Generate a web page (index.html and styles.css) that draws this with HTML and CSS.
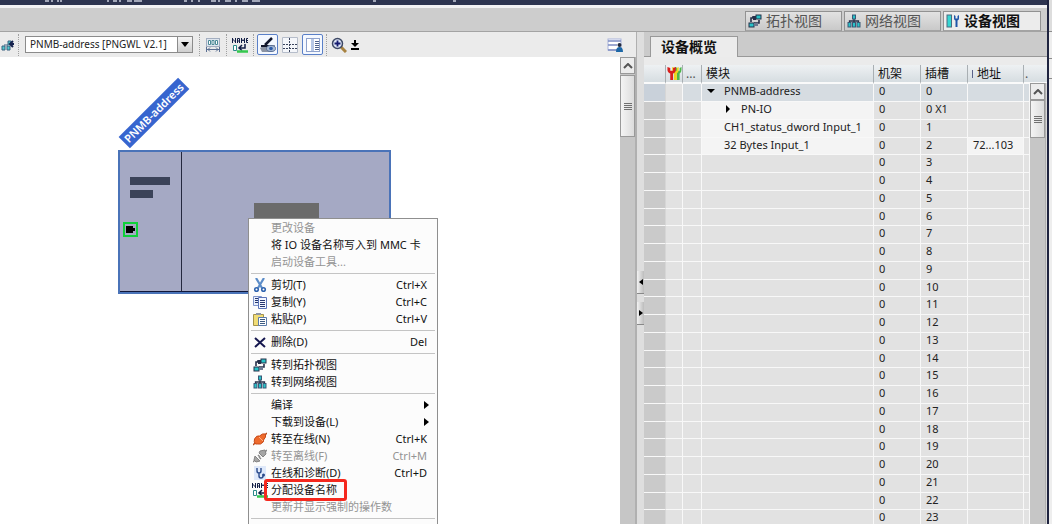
FILE: index.html
```html
<!DOCTYPE html>
<html lang="zh-CN">
<head>
<meta charset="utf-8">
<title>设备视图</title>
<link rel="stylesheet" href="styles.css">
</head>
<body>
<svg class="defs" aria-hidden="true">
  <symbol id="i-topo" viewBox="0 0 14 14"><path d="M4 3h4M11 6v3H6M3 8V4h4M8 10H5" stroke="#26304a" stroke-width="1.6" fill="none"/><rect x="1" y="9" width="5" height="4" fill="#27c3c8" stroke="#26304a"/><rect x="8" y="1" width="5" height="4" fill="#27c3c8" stroke="#26304a"/><rect x="5" y="2" width="3" height="4" fill="#26304a"/><rect x="6" y="9" width="4" height="3" fill="#6d7890"/></symbol>
  <symbol id="i-net" viewBox="0 0 14 14"><path d="M7 5v4M2.500 9V7h9v2" stroke="#26304a" stroke-width="1.300" fill="none"/><rect x="5.500" y="1" width="3" height="4" fill="#27c3c8" stroke="#3a5876"/><rect x="1" y="8.500" width="3" height="4.500" fill="#27c3c8" stroke="#3a5876"/><rect x="5.500" y="8.500" width="3" height="4.500" fill="#27c3c8" stroke="#3a5876"/><rect x="10" y="8.500" width="3" height="4.500" fill="#27c3c8" stroke="#3a5876"/></symbol>
  <symbol id="i-dev" viewBox="0 0 14 14"><rect x="1" y="1" width="4.500" height="12" fill="#35d6d2" stroke="#4b6a80"/><path d="M8 1v3.500q0 1.500 1.500 2V13h2V6.500q1.500-.5 1.500-2V1l-1.500 1v2.500h-2V2z" fill="#1f55a8"/></symbol>
  <symbol id="i-name" viewBox="0 0 16 16"><path d="M.5 6V1M3.500 6V1M.5 2l3 3M5.500 6V1.500h2V6M5.500 4h2M9.500 6V1M12.500 6V1M9.500 2l1.500 2 1.500-2M16 1.500h-1.500v4H16M14.500 3.500H16" stroke="#111d45" fill="none"/><path d="M1.500 8.500h3v5h-3z" fill="#fff" stroke="#2b8a8a"/><path d="M13 7v4H7m3-3l-3 3 3 2.500" stroke="#111d45" stroke-width="1.500" fill="none"/><path d="M5 14.500h11" stroke="#35c84e" stroke-width="2.500"/></symbol>
</svg>
<div class="app">
  <header class="titlebar">
    <svg class="caption" viewBox="0 0 500 3" width="500" height="3" aria-hidden="true"><path d="M45 1h4M52 0v2M58 0v2M61 0v2M108 0v2M113 1h4M120 0v2M127 1h5M134 1h8M184 1h3M192 0v2M199 0v2M211 1h5M219 0v2M225 1h6M236 0v2M242 1h6M252 1h8M373 1h3M453 1h3" stroke="#c9cddb" stroke-width="1.500" fill="none"/></svg>
  </header>
  <nav class="viewbar">
    <button class="view"><svg class="icon"><use href="#i-topo"/></svg>拓扑视图</button>
    <button class="view"><svg class="icon"><use href="#i-net"/></svg>网络视图</button>
    <button class="view active"><svg class="icon"><use href="#i-dev"/></svg>设备视图</button>
  </nav>
  <main class="work">
    <section class="editor">
      <div class="toolbar">
        <button class="tool clipped" aria-label="插入"><svg viewBox="0 0 16 16"><path d="M3 8h4V4h3v4M1 13V9h3v4zm5 0V9h3v4z" stroke="#3b6180" fill="#4fc8cc"/><path d="M16 7H9m3-3L9 7l3 3" stroke="#14204c" stroke-width="2" fill="none"/></svg></button>
        <span class="rule"></span>
        <span class="combo">
          <select aria-label="设备"><option>PNMB-address [PNGWL V2.1]</option></select>
          <span class="drop"><svg viewBox="0 0 8 5"><path d="M0 0h8L4 5z"/></svg></span>
        </span>
        <span class="rule"></span>
        <button class="tool" aria-label="宽度"><svg viewBox="0 0 16 16"><rect x="1.500" y="1.500" width="13" height="8" fill="#dfe6ef" stroke="#a3aec0"/><path d="M3.500 3.500h2v4h-2zm3.500 0h2v4H7zm3.500 0h2v4h-2z" fill="#fff" stroke="#4d8a96"/><path d="M1.500 10v5M14.500 10v5M2 12.500h12M5 10.500l-2 2 2 2M11 10.500l2 2-2 2" stroke="#5b6f92" fill="none"/></svg></button>
        <span class="rule"></span>
        <button class="tool" aria-label="名称"><svg><use href="#i-name"/></svg></button>
        <span class="rule"></span>
        <button class="tool on" aria-label="显示"><svg viewBox="0 0 16 16"><path d="M0 11l5-3h10v5l-4 2H2z" fill="#8b93a3"/><path d="M5 8l7-7" stroke="#10162c" stroke-width="2.500"/><path d="M1 9h8" stroke="#10162c" stroke-width="2"/><ellipse cx="11" cy="11.500" rx="4.500" ry="3" fill="#a9bbd6" stroke="#5b7096"/><circle cx="11" cy="11.500" r="1.800" fill="#2d5ca8"/></svg></button>
        <button class="tool" aria-label="网格"><svg viewBox="0 0 16 16"><path d="M.5.5h15v15H.5z" fill="#f4f6fa" stroke="#b6bdca"/><path d="M7.500 1v14M1 7.500h14M1 11.500h14" stroke="#39435c" stroke-dasharray="2 1"/></svg></button>
        <button class="tool on" aria-label="列表"><svg viewBox="0 0 16 16"><rect x="1.500" y="1.500" width="13" height="13" fill="#fff" stroke="#8fa2cc"/><path d="M6 2h3v12H6z" fill="#b8c8e6"/><path d="M10 4.500h4M10 6.500h4M10 8.500h4M10 10.500h4M10 12.500h4" stroke="#51648e"/></svg></button>
        <span class="rule"></span>
        <button class="tool zoom" aria-label="缩放"><svg viewBox="0 0 16 16"><path d="M10 10l5 5" stroke="#a78240" stroke-width="3"/><circle cx="6.500" cy="6.500" r="5" fill="#dce4f5" stroke="#3d4865" stroke-width="1.500"/><path d="M6.500 3.500v6M3.500 6.500h6" stroke="#151b70" stroke-width="1.800"/></svg></button>
        <button class="tool thin" aria-label="缩放选项"><svg viewBox="0 0 8 16"><path d="M3 3h2v3h3L4 10 0 6h3zM0 11h8v2H0z"/></svg></button>
        <button class="tool last" aria-label="用户视图"><svg viewBox="0 0 16 16"><rect x="1" y="2" width="13" height="11" fill="#fff" stroke="#a9b4dc"/><path d="M1 4h13M1 8h9M1 13h9" stroke="#7c8cc2" stroke-width="1.500"/><circle cx="12.500" cy="8" r="2" fill="#222b40"/><path d="M9 15q0-5 3.500-5t3.500 5z" fill="#1c67a6"/></svg></button>
      </div>
      <div class="stage">
        <div class="canvas">
          <span class="tag">PNMB-address</span>
          <div class="device">
            <span class="split"></span><span class="line long"></span><span class="line short"></span>
            <span class="port"><svg viewBox="0 0 11 11"><path d="M1 2h7v2h2v3H8v2H1z"/></svg></span>
            <span class="block"></span>
          </div>
        </div>
        <div class="scroll">
          <button aria-label="向上"><svg viewBox="0 0 10 6"><path d="M1 5l4-4 4 4"/></svg></button>
          <span class="thumb tall"></span>
        </div>
      </div>
    </section>
    <div class="splitter">
      <button aria-label="收起左侧"><svg viewBox="0 0 4 6"><path d="M4 0v6L0 3z"/></svg></button>
      <button aria-label="收起右侧"><svg viewBox="0 0 4 6"><path d="M0 0v6l4-3z"/></svg></button>
    </div>
    <section class="overview">
      <div class="tabs"><button class="tab">设备概览</button></div>
      <div class="grid">
        <table>
          <colgroup><col class="c-mark"><col class="c-diag"><col class="c-dots"><col><col class="c-num"><col class="c-num"><col class="c-addr"><col class="c-end"></colgroup>
          <thead><tr><th></th><th class="pic"><svg viewBox="0 0 16 16"><path d="M9 1v3q0 3 2 4v7h3V8q2-1 2-4V1l-2 1v3h-2V2z" fill="#4cb84a"/><path d="M6 1v3q0 3 2 4v7h3V8q2-1 2-4V1l-2 1v3H9V2z" fill="#f0d51c"/><path d="M1 1v3q0 3 3 4v7h3V8q3-1 3-4V1L7 2v3H4V2z" fill="#d81f1d"/></svg></th><th class="dots">...</th><th>模块</th><th>机架</th><th>插槽</th><th><i class="bar"></i>地址</th><th class="dots">.</th></tr></thead>
          <tbody>
            <tr class="sel"><td></td><td></td><td></td><td class="name"><svg class="tw" viewBox="0 0 8 8"><path d="M0 2h8L4 6z"/></svg>PNMB-address</td><td>0</td><td>0</td><td></td><td></td></tr>
            <tr><td></td><td></td><td></td><td class="name sub used"><svg class="tw" viewBox="0 0 8 8"><path d="M2 0v8l4-4z"/></svg>PN-IO</td><td>0</td><td>0 X1</td><td></td><td></td></tr>
            <tr><td></td><td></td><td></td><td class="name leaf used">CH1_status_dword Input_1</td><td>0</td><td>1</td><td></td><td></td></tr>
            <tr><td></td><td></td><td></td><td class="name leaf used">32 Bytes Input_1</td><td>0</td><td>2</td><td class="used">72...103</td><td></td></tr>
            <tr><td></td><td></td><td></td><td></td><td>0</td><td>3</td><td></td><td></td></tr>
            <tr><td></td><td></td><td></td><td></td><td>0</td><td>4</td><td></td><td></td></tr>
            <tr><td></td><td></td><td></td><td></td><td>0</td><td>5</td><td></td><td></td></tr>
            <tr><td></td><td></td><td></td><td></td><td>0</td><td>6</td><td></td><td></td></tr>
            <tr><td></td><td></td><td></td><td></td><td>0</td><td>7</td><td></td><td></td></tr>
            <tr><td></td><td></td><td></td><td></td><td>0</td><td>8</td><td></td><td></td></tr>
            <tr><td></td><td></td><td></td><td></td><td>0</td><td>9</td><td></td><td></td></tr>
            <tr><td></td><td></td><td></td><td></td><td>0</td><td>10</td><td></td><td></td></tr>
            <tr><td></td><td></td><td></td><td></td><td>0</td><td>11</td><td></td><td></td></tr>
            <tr><td></td><td></td><td></td><td></td><td>0</td><td>12</td><td></td><td></td></tr>
            <tr><td></td><td></td><td></td><td></td><td>0</td><td>13</td><td></td><td></td></tr>
            <tr><td></td><td></td><td></td><td></td><td>0</td><td>14</td><td></td><td></td></tr>
            <tr><td></td><td></td><td></td><td></td><td>0</td><td>15</td><td></td><td></td></tr>
            <tr><td></td><td></td><td></td><td></td><td>0</td><td>16</td><td></td><td></td></tr>
            <tr><td></td><td></td><td></td><td></td><td>0</td><td>17</td><td></td><td></td></tr>
            <tr><td></td><td></td><td></td><td></td><td>0</td><td>18</td><td></td><td></td></tr>
            <tr><td></td><td></td><td></td><td></td><td>0</td><td>19</td><td></td><td></td></tr>
            <tr><td></td><td></td><td></td><td></td><td>0</td><td>20</td><td></td><td></td></tr>
            <tr><td></td><td></td><td></td><td></td><td>0</td><td>21</td><td></td><td></td></tr>
            <tr><td></td><td></td><td></td><td></td><td>0</td><td>22</td><td></td><td></td></tr>
            <tr><td></td><td></td><td></td><td></td><td>0</td><td>23</td><td></td><td></td></tr>
          </tbody>
        </table>
        <div class="gutter">
          <span class="cap"></span>
          <div class="scroll">
            <button aria-label="向上"><svg viewBox="0 0 10 6"><path d="M1 5l4-4 4 4"/></svg></button>
            <span class="thumb"></span>
          </div>
        </div>
      </div>
    </section>
  </main>
</div>
<aside class="edge"><span></span><span></span><span></span></aside>

<div class="menu" role="menu">
  <button class="item" disabled><span></span><span>更改设备</span></button>
  <button class="item"><span></span><span>将 IO 设备名称写入到 MMC 卡</span></button>
  <button class="item" disabled><span></span><span>启动设备工具...</span></button>
  <hr>
  <button class="item"><svg viewBox="0 0 14 14"><path d="M3 0l6 10M11 0L5 10" stroke="#5b8cc8" stroke-width="2.200" fill="none"/><circle cx="3.500" cy="11.500" r="1.800" fill="none" stroke="#2d62ae" stroke-width="1.600"/><circle cx="10.500" cy="11.500" r="1.800" fill="none" stroke="#2d62ae" stroke-width="1.600"/></svg><span>剪切(T)</span><kbd>Ctrl+X</kbd></button>
  <button class="item"><svg viewBox="0 0 14 14"><path d="M.5 1.500h8v9h-8z" fill="#e8eefb" stroke="#7f95cc"/><path d="M5.500 2.500h8v11h-8z" fill="#f4f7ff" stroke="#5a74b8"/><path d="M2 3.500h3M2 5.500h3M2 7.500h3M7 5.500h5M7 7.500h5M7 9.500h5M7 11.500h5" stroke="#25366e"/></svg><span>复制(Y)</span><kbd>Ctrl+C</kbd></button>
  <button class="item"><svg viewBox="0 0 14 14"><path d="M.5 2.500h10v11H.5z" fill="#f0dc76" stroke="#a3924a"/><rect x="3" y="1" width="5" height="2" fill="#8f96a4"/><path d="M5.500 5.500h8v8h-8z" fill="#fff" stroke="#5a7ba8"/><path d="M7 7.500h5M7 9.500h5M7 11.500h5" stroke="#3c5a80"/></svg><span>粘贴(P)</span><kbd>Ctrl+V</kbd></button>
  <hr>
  <button class="item"><svg viewBox="0 0 14 14"><path d="M2 3l10 9M12 3L2 12" stroke="#15174f" stroke-width="2" fill="none"/></svg><span>删除(D)</span><kbd>Del</kbd></button>
  <hr>
  <button class="item"><svg><use href="#i-topo"/></svg><span>转到拓扑视图</span></button>
  <button class="item"><svg><use href="#i-net"/></svg><span>转到网络视图</span></button>
  <hr>
  <button class="item"><span></span><span>编译</span><svg class="more" viewBox="0 0 5 8"><path d="M0 0v8l5-4z"/></svg></button>
  <button class="item"><span></span><span>下载到设备(L)</span><svg class="more" viewBox="0 0 5 8"><path d="M0 0v8l5-4z"/></svg></button>
  <button class="item"><svg viewBox="0 0 14 14"><path d="M0 13l3-3M11 4l3-3" stroke="#b84a1c" stroke-width="1.500"/><path d="M1.500 7q2-4 5-3 3-3 6-2 1 3-2 6 1 2-3 4-3 0-5 0-2-2-1-5z" fill="#ee6a2c" stroke="#c64a18"/><path d="M6 5l4 4" stroke="#ffb083"/></svg><span>转至在线(N)</span><kbd>Ctrl+K</kbd></button>
  <button class="item" disabled><svg viewBox="0 0 14 14"><path d="M0 13l3-3M11 4l3-3M5 6l2 2M6 8l2 2" stroke="#8a8a8a" stroke-width="1.500"/><path d="M2 7l5 5-4 1-2-2zM7 2l5-1 1 4-3 3-4-4z" fill="#a6a6a6" stroke="#858585"/></svg><span>转至离线(F)</span><kbd>Ctrl+M</kbd></button>
  <button class="item"><svg viewBox="0 0 14 14"><rect x="1" y="0" width="12" height="14" fill="#dfe9fa"/><path d="M4 2v3q0 2 2 2t2-2V2M6 7v3q0 2 2 2t2-2" stroke="#2a4a8c" stroke-width="1.400" fill="none"/><circle cx="10.500" cy="9" r="1.500" fill="#2a4a8c"/></svg><span>在线和诊断(D)</span><kbd>Ctrl+D</kbd></button>
  <button class="item"><svg class="wide"><use href="#i-name"/></svg><span class="marked">分配设备名称</span></button>
  <button class="item" disabled><span></span><span>更新并显示强制的操作数</span></button>
  <hr>
  <button class="item" disabled aria-label="更多"><svg viewBox="0 0 14 14"><path d="M5 5q4-3 8 0v5H5z" fill="#b5b5b5"/></svg></button>
</div>
</body>
</html>
```
FILE: styles.css
```css
* { box-sizing: border-box; }
body {
  margin: 0;
  height: 100vh;
  overflow: hidden;
  display: flex;
  background: #ebebeb;
  color: #222;
  font: 11px/16px "Noto Sans", "Noto Sans CJK SC", sans-serif;
}
button { font: inherit; color: inherit; border: 0; padding: 0; margin: 0; background: none; }
svg { display: block; flex: none; }
.defs { position: absolute; width: 0; height: 0; }

.app { flex: 1; min-width: 0; display: flex; flex-direction: column; }
.titlebar { height: 5px; background: #2d3450; overflow: hidden; flex: none; }
.caption { display: block; }

.viewbar {
  flex: none;
  height: 27px;
  display: flex;
  align-items: flex-end;
  justify-content: flex-end;
  gap: 2px;
  padding: 0 6px 0 0;
  background: #cdcdcd;
  border-top: 3px solid #f2f2f4;
  border-bottom: 1px solid #a3a3a3;
}
.view {
  display: flex;
  align-items: center;
  gap: 4px;
  width: 97px;
  height: 20px;
  padding-left: 2px;
  border: 1px solid #929292;
  border-bottom-color: #a3a3a3;
  background: linear-gradient(#e2e2e2, #c9c9c9);
  color: #555;
  font-size: 14px;
  line-height: 18px;
  white-space: nowrap;
}
.view.active { width: 98px; background: #ececec; color: #111; font-weight: bold; }
.icon { width: 14px; height: 14px; }

.work { flex: 1; min-height: 0; display: flex; }
.editor { flex: 1; min-width: 0; display: flex; flex-direction: column; }
.toolbar {
  flex: none;
  height: 25px;
  display: flex;
  align-items: center;
  gap: 2px;
  background: #ebebeb;
}
.tool { width: 20px; height: 20px; display: grid; place-items: center; border: 1px solid transparent; border-radius: 2px; flex: none; }
.tool svg { width: 16px; height: 16px; }
.tool.on { width: 21px; height: 21px; background: #f4f8ff; border-color: #5a80c8; }
.tool.clipped { width: 15px; overflow: hidden; justify-items: end; }
.tool.zoom { width: 18px; }
.tool.thin { width: 10px; }
.tool.thin svg { width: 8px; height: 16px; }
.tool.last { margin-left: auto; margin-right: 11px; }
.rule { height: 22px; margin: 0 1px; border-left: 1px dotted #a0a0a0; }
.combo { display: flex; width: 168px; height: 17px; margin: 0 3px; border: 1px solid #8b8b8b; background: #fff; position: relative; }
.combo select {
  appearance: none;
  width: 100%;
  border: 0;
  padding: 0 16px 0 4px;
  background: none;
  color: #222;
  font: 10px/15px "Noto Sans", sans-serif;
}
.drop {
  position: absolute;
  inset: 0 0 0 auto;
  width: 15px;
  display: grid;
  place-items: center;
  border-left: 1px solid #8b8b8b;
  background: linear-gradient(#f4f4f4, #cfcfcf);
  pointer-events: none;
}
.drop svg { width: 8px; height: 5px; }

.stage { flex: 1; min-height: 0; display: flex; }
.canvas { flex: 1; position: relative; background: #fff; overflow: hidden; }
.tag {
  position: absolute;
  left: 112px;
  top: 48px;
  width: 84px;
  height: 16px;
  background: #3765cf;
  color: #fff;
  font-weight: 600;
  text-align: center;
  transform: rotate(-45deg);
}
.device { position: absolute; left: 118px; top: 93px; width: 273px; height: 144px; border: 2px solid #4a73b8; background: #a5a9c4; }
.device span { position: absolute; }
.split { left: 61px; top: 0; bottom: 0; width: 1px; background: #24283e; }
.device::after { content: ""; position: absolute; left: 0; right: 0; bottom: 0; height: 1px; background: #10173a; }
.line { left: 10px; height: 8px; background: #3b4359; }
.long { top: 25px; width: 40px; }
.short { top: 38px; width: 23px; }
.port { left: 3px; top: 70px; width: 15px; height: 15px; border: 2px solid #0fd13a; }
.port svg { width: 11px; height: 11px; }
.block { left: 134px; top: 51px; width: 65px; height: 40px; background: #6b6b6b; }

.scroll { width: 16px; flex: 1; display: flex; flex-direction: column; background: #c6c6c6; border-right: 1px solid #b0b0b0; }
.stage .scroll { flex: none; }
.scroll button { height: 17px; display: grid; place-items: center; border: 1px solid #999; background: #ececec; flex: none; }
.scroll svg { width: 10px; height: 6px; fill: none; stroke: #555; stroke-width: 2; }
.thumb { height: 38px; border: 1px solid #999; background: linear-gradient(90deg, #f4f4f4, #dcdcdc); display: grid; place-items: center; }
.thumb.tall { height: 62px; margin-top: 1px; }
.thumb::after { content: ""; width: 8px; height: 7px; background: repeating-linear-gradient(#707070 0 1px, transparent 1px 2px); }

.splitter { width: 8px; flex: none; display: flex; flex-direction: column; justify-content: center; gap: 8px; background: #dedede; border-left: 1px solid #b0b0b0; padding-top: 40px; }
.splitter button { height: 23px; display: grid; place-items: center; background: linear-gradient(90deg, #f2f2f2, #bcbcbc); border-bottom: 1px solid #888; }
.splitter svg { width: 4px; height: 6px; }

.overview { width: 403px; flex: none; display: flex; flex-direction: column; background: #ebebeb; }
.tabs { flex: none; height: 25px; padding: 4px 0 0 6px; background: #cbcbcb; border-bottom: 1px solid #999; }
.tab { display: block; width: 88px; height: 21px; background: #ececec; border: 1px solid #999; border-bottom: 0; font-weight: bold; font-size: 14px; line-height: 18px; color: #111; text-align: left; padding-left: 10px; white-space: nowrap; }
.grid { flex: 1; min-height: 0; display: flex; align-items: stretch; padding-top: 8px; overflow: hidden; }
table { flex: 1; table-layout: fixed; border-collapse: separate; border-spacing: 0; width: 100%; height: max-content; }
.c-mark { width: 22px; }
.c-diag { width: 17px; }
.c-dots { width: 19px; }
.c-num { width: 47px; }
.c-addr { width: 56px; }
.c-end { width: 6px; }
th {
  height: 19px;
  padding: 0 4px;
  text-align: left;
  font-weight: normal;
  font-size: 12px;
  line-height: 16px;
  white-space: nowrap;
  overflow: hidden;
  color: #111;
  background: linear-gradient(#eef1f3, #d6dde1);
  border-right: 1px solid #a9afb3;
  border-bottom: 2px solid #fafafa;
}
th.pic { padding: 0; }
th.pic svg { width: 16px; height: 15px; }
th.dots { padding: 0 3px; color: #555; }
th.dots:last-child { padding: 0 1px; border-right: 0; }
.bar { display: inline-block; width: 1px; height: 8px; margin-right: 4px; background: #5a628a; }
td { height: 18px; padding: 0 4px 3px 5px; line-height: 14px; white-space: nowrap; overflow: hidden; background: #e2e2e2; border-right: 1px solid #f8f8f8; border-bottom: 1px solid #f8f8f8; }
tbody tr:nth-child(4n) td { height: 17px; padding-bottom: 2px; }
td:first-child { background: #cacaca; border-right-color: #d6d6d6; }
.sel td { background: #d6dce1; }
.sel td:nth-child(2) { background: #e2e2e2; }
.sel td:first-child { background: #c9d1da; }
td.used { background: #f4f4f4; }
.name.leaf { padding-left: 22px; }
.name.sub { padding-left: 22px; }
.tw { display: inline-block; width: 8px; height: 8px; margin-right: 9px; }
.gutter { flex: none; width: 17px; display: flex; flex-direction: column; background: #d9d9d9; }
.cap { height: 18px; background: linear-gradient(#eef1f3, #d6dde1); border-bottom: 1px solid #fafafa; }

.edge { flex: none; width: 5px; border-left: 2px solid #1f2440; background: #eee; display: flex; flex-direction: column; }
.edge span { border-bottom: 1px solid #8c8c8c; }
.edge span:nth-child(1) { height: 32px; background: #ddd; }
.edge span:nth-child(2) { height: 27px; }
.edge span:nth-child(3) { height: 20px; }

.menu {
  position: absolute;
  left: 248px;
  top: 218px;
  width: 190px;
  background: #fcfcfc;
  border: 1px solid #8f8f8f;
}
.item { display: grid; grid-template-columns: 22px 1fr auto; align-items: center; width: 100%; height: 17px; padding-right: 10px; text-align: left; line-height: 16px; color: #111; white-space: nowrap; }
.item:disabled { color: #949494; }
.item svg { width: 14px; height: 14px; margin-left: 4px; }
.item .wide { width: 16px; height: 16px; margin-left: 3px; }
.item .more { width: 5px; height: 8px; margin: 0 -2px 0 0; }
.item kbd { font: inherit; }
.menu hr { height: 1px; margin: 3px 2px 2px; border: 0; background: #c4c4c4; }
.marked { position: relative; justify-self: start; }
.marked::after { content: ""; position: absolute; inset: -3px -10px -3px -7px; border: 3px solid #f5281e; border-radius: 3px; }
```
